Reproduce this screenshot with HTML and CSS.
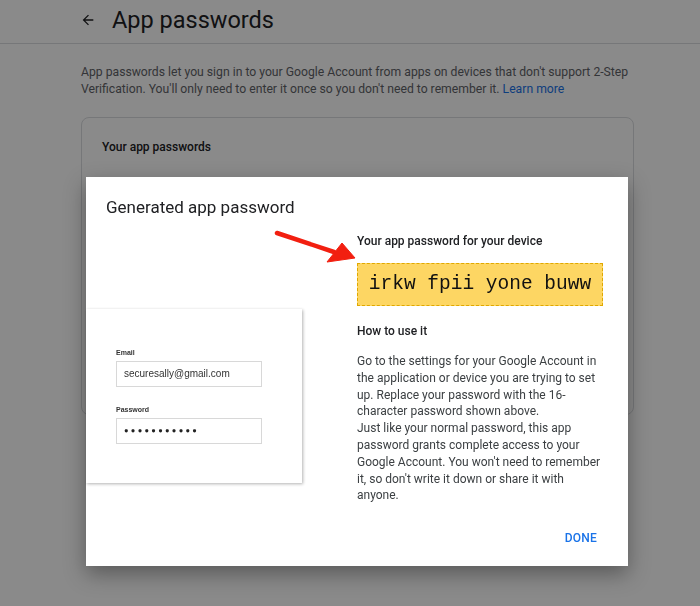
FILE: index.html
```html
<!DOCTYPE html>
<html>
<head>
<meta charset="utf-8">
<link rel="stylesheet" href="styles.css">
</head>
<body>
<header class="topbar">
  <svg class="back" width="16" height="16" viewBox="0 0 24 24"><path d="M20 11H7.83l5.59-5.59L12 4l-8 8 8 8 1.41-1.41L7.83 13H20v-2z" fill="#202124"/></svg>
  <h1 class="page-title">App passwords</h1>
</header>
<main class="content">
  <p class="intro">App passwords let you sign in to your Google Account from apps on devices that don't support 2-Step Verification. You'll only need to enter it once so you don't need to remember it. <a class="link" href="#">Learn more</a></p>
  <section class="card">
    <h2 class="card-title">Your app passwords</h2>
  </section>
</main>
<div class="scrim"></div>
<div class="dialog">
  <h2 class="dialog-title">Generated app password</h2>
  <div class="dialog-body">
    <div class="illustration">
      <div class="field-label">Email</div>
      <div class="field">securesally@gmail.com</div>
      <div class="field-label pw">Password</div>
      <div class="field dots">●●●●●●●●●●●</div>
    </div>
    <div class="info">
      <div class="label">Your app password for your device</div>
      <div class="pwbox">irkw fpii yone buww</div>
      <div class="label how">How to use it</div>
      <p class="how-text">Go to the settings for your Google Account in the application or device you are trying to set up. Replace your password with the 16-character password shown above.<br>Just like your normal password, this app password grants complete access to your Google Account. You won't need to remember it, so don't write it down or share it with anyone.</p>
    </div>
  </div>
  <div class="actions"><span class="done">DONE</span></div>
  <svg class="arrow" width="90" height="45" viewBox="0 0 90 45"><path d="M3 4 L60 23" stroke="#f21f10" stroke-width="4.5" stroke-linecap="round"/><path d="M68 14 L81 29 L53 33 Z" fill="#f21f10" stroke="#f21f10" stroke-width="1" stroke-linejoin="round"/></svg>
</div>
</body>
</html>
```

FILE: styles.css
```css
* { box-sizing: border-box; }
html, body { margin: 0; padding: 0; }
body {
  background: #ffffff;
  font-family: Roboto, "Noto Sans", sans-serif;
  color: #202124;
  width: 700px;
  height: 606px;
  overflow: hidden;
}
.topbar {
  height: 44px;
  border-bottom: 1px solid #dadce0;
  display: flex;
  align-items: center;
  padding-left: 80px;
  padding-bottom: 4px;
}
.back { margin-right: 16px; }
.page-title {
  margin: 0;
  font-size: 23.5px;
  font-weight: 400;
  color: #202124;
}
.content { padding: 20px 67px 0 81px; }
.intro {
  margin: 0;
  font-size: 12.2px;
  line-height: 17px;
  color: #5f6368;
}
.link { color: #1a73e8; text-decoration: none; }
.card {
  margin-top: 19px;
  border: 1px solid #dadce0;
  border-radius: 8px;
  height: 298px;
  width: 553px;
  padding: 22px 20px;
}
.card-title {
  margin: 0;
  font-size: 12px;
  font-weight: 500;
  color: #202124;
}
.scrim {
  position: fixed;
  inset: 0;
  background: rgba(0,0,0,0.46);
}
.dialog {
  position: absolute;
  left: 86px;
  top: 177px;
  width: 542px;
  height: 389px;
  background: #fff;
  box-shadow: 0 8px 20px rgba(0,0,0,0.35);
  padding: 18px 25px 0 20px;
}
.dialog-title {
  margin: 0;
  font-size: 17px;
  line-height: 24px;
  font-weight: 400;
  color: #202124;
}
.dialog-body {
  display: flex;
  margin-top: 14px;
  margin-left: -20px;
}
.illustration {
  width: 216px;
  height: 174px;
  margin-top: 76px;
  background: #fff;
  box-shadow: 1px 1px 3px rgba(0,0,0,0.3);
  padding: 39px 40px 0 30px;
  flex: none;
}
.field-label {
  font-family: "Liberation Sans", Arial, sans-serif;
  font-size: 7px;
  font-weight: 700;
  color: #333;
  line-height: 9px;
}
.field-label.pw { margin-top: 18px; }
.field {
  margin-top: 4px;
  height: 26px;
  border: 1px solid #d8d8d8;
  font-family: "Liberation Sans", Arial, sans-serif;
  font-size: 10px;
  color: #333;
  line-height: 24px;
  padding-left: 7px;
}
.dots { font-size: 7.5px; letter-spacing: 2.3px; color: #222; }
.info {
  margin-left: 55px;
  width: 248px;
}
.label {
  font-size: 12px;
  line-height: 16px;
  font-weight: 500;
  color: #202124;
}
.pwbox {
  margin-top: 14px;
  width: 246px;
  height: 43px;
  background: #fdd663;
  border: 1px dashed #e0a800;
  font-family: "Liberation Mono", "Courier New", monospace;
  font-size: 19.5px;
  line-height: 41px;
  text-align: center;
  color: #111;
}
.how { margin-top: 17px; }
.how-text {
  margin: 14px 0 0;
  font-size: 12px;
  line-height: 16.8px;
  color: #3c4043;
}
.actions {
  position: absolute;
  right: 31px;
  bottom: 20px;
}
.done {
  font-size: 12px;
  font-weight: 500;
  letter-spacing: 0.2px;
  color: #1a73e8;
}
.arrow {
  position: absolute;
  left: 188px;
  top: 52px;
}
```
